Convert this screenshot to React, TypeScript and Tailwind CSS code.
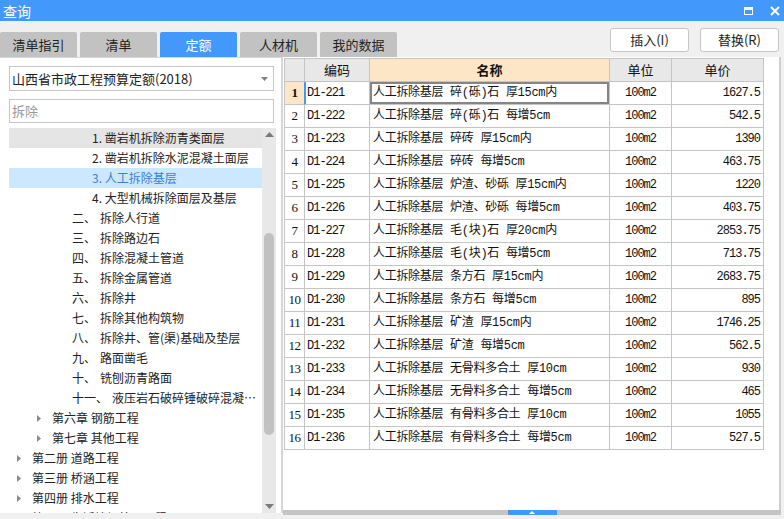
import React from 'react';

type TreeNode = {
  num?: string;
  label: string;
  level: 'book' | 'chapter' | 'section' | 'item';
  state?: 'hover' | 'selected';
};

const treeNodes: TreeNode[] = [
  { label: '1. 凿岩机拆除沥青类面层', level: 'item', state: 'hover' },
  { label: '2. 凿岩机拆除水泥混凝土面层', level: 'item' },
  { label: '3. 人工拆除基层', level: 'item', state: 'selected' },
  { label: '4. 大型机械拆除面层及基层', level: 'item' },
  { num: '二、', label: '拆除人行道', level: 'section' },
  { num: '三、', label: '拆除路边石', level: 'section' },
  { num: '四、', label: '拆除混凝土管道', level: 'section' },
  { num: '五、', label: '拆除金属管道', level: 'section' },
  { num: '六、', label: '拆除井', level: 'section' },
  { num: '七、', label: '拆除其他构筑物', level: 'section' },
  { num: '八、', label: '拆除井、管(渠)基础及垫层', level: 'section' },
  { num: '九、', label: '路面凿毛', level: 'section' },
  { num: '十、', label: '铣刨沥青路面', level: 'section' },
  { num: '十一、', label: '液压岩石破碎锤破碎混凝土及钢筋混凝土', level: 'section' },
  { label: '第六章 钢筋工程', level: 'chapter' },
  { label: '第七章 其他工程', level: 'chapter' },
  { label: '第二册 道路工程', level: 'book' },
  { label: '第三册 桥涵工程', level: 'book' },
  { label: '第四册 排水工程', level: 'book' },
  { label: '第五册 生活垃圾处理工程', level: 'book' },
];

const rows = [
  ['D1-221', '人工拆除基层 碎(砾)石 厚15cm内', '1627.5'],
  ['D1-222', '人工拆除基层 碎(砾)石 每增5cm', '542.5'],
  ['D1-223', '人工拆除基层 碎砖 厚15cm内', '1390'],
  ['D1-224', '人工拆除基层 碎砖 每增5cm', '463.75'],
  ['D1-225', '人工拆除基层 炉渣、砂砾 厚15cm内', '1220'],
  ['D1-226', '人工拆除基层 炉渣、砂砾 每增5cm', '403.75'],
  ['D1-227', '人工拆除基层 毛(块)石 厚20cm内', '2853.75'],
  ['D1-228', '人工拆除基层 毛(块)石 每增5cm', '713.75'],
  ['D1-229', '人工拆除基层 条方石 厚15cm内', '2683.75'],
  ['D1-230', '人工拆除基层 条方石 每增5cm', '895'],
  ['D1-231', '人工拆除基层 矿渣 厚15cm内', '1746.25'],
  ['D1-232', '人工拆除基层 矿渣 每增5cm', '562.5'],
  ['D1-233', '人工拆除基层 无骨料多合土 厚10cm', '930'],
  ['D1-234', '人工拆除基层 无骨料多合土 每增5cm', '465'],
  ['D1-235', '人工拆除基层 有骨料多合土 厚10cm', '1055'],
  ['D1-236', '人工拆除基层 有骨料多合土 每增5cm', '527.5'],
];

const tabs = ['清单指引', '清单', '定额', '人材机', '我的数据'];

const Arrow = () => (
  <svg width="4" height="7" viewBox="0 0 4 7" className="shrink-0">
    <path d="M0 0 L4 3.5 L0 7 Z" fill="#8a8a8a" />
  </svg>
);

const TreeRow: React.FC<{ node: TreeNode }> = ({ node }) => {
  const bg =
    node.state === 'hover' ? 'bg-[#e5e5e5]' : node.state === 'selected' ? 'bg-[#cce8ff]' : 'bg-white';
  const color = node.state === 'selected' ? 'text-[#3a7fd6]' : 'text-[#222]';
  return (
    <div className={`h-[20px] flex items-center text-[12px] leading-[20px] whitespace-nowrap ${bg} ${color}`}>
      {node.level === 'item' && <span className="pl-[83px]">{node.label}</span>}
      {node.level === 'section' && (
        <div className="pl-[63px] flex min-w-0">
          <span>{node.num}</span>
          <span className="ml-1 truncate max-w-[150px]">{node.label}</span>
        </div>
      )}
      {node.level === 'chapter' && (
        <div className="pl-[28px] flex items-center">
          <Arrow />
          <span className="ml-[11px]">{node.label}</span>
        </div>
      )}
      {node.level === 'book' && (
        <div className="pl-[8px] flex items-center">
          <Arrow />
          <span className="ml-[11px]">{node.label}</span>
        </div>
      )}
    </div>
  );
};

const cell = 'border-r border-b border-[#c4c4c4] h-[23px] flex items-center';
const mono = "font-['Liberation_Mono',monospace] text-[12px] tracking-[-1px]";

export default function App() {
  return (
    <div className="w-[784px] h-[519px] bg-[#f0f0f0] flex flex-col overflow-hidden font-['Noto_Sans_CJK_SC',sans-serif]">
      {/* title bar */}
      <div className="h-[21px] bg-[#4399fb] flex items-center justify-between pl-[3px] pr-[4px]">
        <span className="text-white text-[14px] leading-[20px]">查询</span>
        <div className="flex items-center gap-[17px]">
          <div className="w-[9px] h-[8px] border border-white border-t-[3px]" />
          <svg width="10" height="10" viewBox="0 0 10 10">
            <path d="M1 1 L9 9 M9 1 L1 9" stroke="white" strokeWidth="2" />
          </svg>
        </div>
      </div>

      {/* tabs & actions */}
      <div className="h-[36px] flex items-start justify-between">
        <div className="flex gap-[3px] pt-[11px]">
          {tabs.map(t => (
            <div
              key={t}
              className={`w-[77px] h-[25px] rounded-t-[2px] flex items-center justify-center text-[13px] ${
                t === '定额' ? 'bg-[#4399fb] text-white' : 'bg-[#c2c2c2] text-[#222]'
              }`}
            >
              {t}
            </div>
          ))}
        </div>
        <div className="flex gap-[11px] pt-[7px] pr-[5px]">
          {['插入(I)', '替换(R)'].map(b => (
            <div
              key={b}
              className="w-[79px] h-[24px] bg-white border border-[#c6c6c6] rounded-[3px] flex items-center justify-center text-[13px] text-[#222]"
            >
              {b}
            </div>
          ))}
        </div>
      </div>

      {/* main */}
      <div className="flex flex-1 min-h-0">
        {/* left panel */}
        <div className="w-[281px] h-[456px] bg-white border-t border-[#d8d8d8] flex flex-col pl-[9px]">
          <div className="mt-[8px] w-[265px] h-[25px] border border-[#c8c8c8] flex items-center justify-between pl-[2px] pr-[5px]">
            <span className="text-[13px] text-[#222]">山西省市政工程预算定额(2018)</span>
            <svg width="7" height="4" viewBox="0 0 7 4">
              <path d="M0 0 L7 0 L3.5 4 Z" fill="#808080" />
            </svg>
          </div>
          <div className="mt-[8px] w-[265px] h-[24px] border border-[#c8c8c8] flex items-center pl-[2px]">
            <span className="text-[13px] text-[#9a9a9a]">拆除</span>
          </div>
          <div className="mt-[5px] flex flex-1 min-h-0 overflow-hidden">
            <div className="w-[253px] overflow-hidden">
              {treeNodes.map(n => (
                <TreeRow key={n.label} node={n} />
              ))}
            </div>
            <div className="w-[14px] bg-[#e8e8e8] flex flex-col items-center justify-between py-[4px]">
              <svg width="9" height="5" viewBox="0 0 9 5">
                <path d="M0 5 L4.5 0 L9 5 Z" fill="#7a7a7a" />
              </svg>
              <div className="flex-1 w-full flex flex-col items-center pt-[96px] pb-[69px]">
                <div className="w-[10px] flex-1 rounded-full bg-[#c1c1c1]" />
              </div>
              <svg width="9" height="5" viewBox="0 0 9 5">
                <path d="M0 0 L9 0 L4.5 5 Z" fill="#7a7a7a" />
              </svg>
            </div>
          </div>
        </div>

        <div className="w-[2px] h-[456px] bg-[#d6d6d6]" />

        {/* right panel */}
        <div className="w-[498px] flex flex-col">
          <div className="h-[453px] bg-white border-r-2 border-[#cfcfcf] pl-[1px] pt-[1px]">
            <div className="w-[480px] border-l border-t border-[#c4c4c4] grid grid-cols-[20px_65px_240px_62px_92px] text-[#111]">
              <div className={`${cell} bg-[#e8e8e8]`} />
              <div className={`${cell} bg-[#e8e8e8] justify-center text-[13px]`}>编码</div>
              <div className={`${cell} bg-[#fde6c6] justify-center text-[13px] font-bold`}>名称</div>
              <div className={`${cell} bg-[#e8e8e8] justify-center text-[13px]`}>单位</div>
              <div className={`${cell} bg-[#e8e8e8] justify-center text-[13px]`}>单价</div>
              {rows.map(([code, name, price], i) => (
                <React.Fragment key={code}>
                  <div
                    className={`${cell} justify-center font-['Liberation_Serif',serif] text-[13px] tracking-[-0.5px] ${
                      i === 0 ? 'bg-[#fde6c6] font-bold border-r-[#4399fb]' : ''
                    }`}
                  >
                    {i + 1}
                  </div>
                  <div className={`${cell} pl-[2px] ${mono} ${i === 0 ? 'shadow-[inset_1px_0_0_#4399fb]' : ''}`}>
                    {code}
                  </div>
                  <div
                    className={`${cell} pl-[3px] text-[12px] whitespace-nowrap font-['Liberation_Mono','Noto_Sans_CJK_SC',monospace] tracking-[-0.3px] ${
                      i === 0 ? 'shadow-[inset_0_0_0_2px_#858585]' : ''
                    }`}
                  >
                    {name}
                  </div>
                  <div className={`${cell} justify-center ${mono}`}>100m2</div>
                  <div className={`${cell} justify-end pr-[3px] ${mono}`}>{price}</div>
                </React.Fragment>
              ))}
            </div>
          </div>
          <div className="h-[5px] bg-[#c4c4c4] flex justify-center">
            <div className="w-[49px] h-[5px] bg-[#4399fb] flex items-center justify-center">
              <svg width="6" height="3" viewBox="0 0 6 3">
                <path d="M0 3 L3 0 L6 3 Z" fill="white" />
              </svg>
            </div>
          </div>
        </div>
      </div>
    </div>
  );
}
